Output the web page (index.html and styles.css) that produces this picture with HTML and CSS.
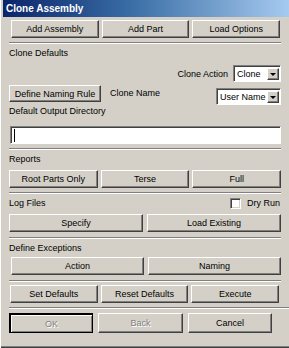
FILE: index.html
```html
<!DOCTYPE html>
<html lang="en">
<head>
    <meta charset="UTF-8">
    <title>Clone Assembly</title>
    <link rel="stylesheet" href="styles.css">
</head>
<body>
    <div class="window">
        <div class="titlebar">Clone Assembly</div>

        <div class="content">
            <div class="row three top-row">
                <button class="btn">Add Assembly</button>
                <button class="btn">Add Part</button>
                <button class="btn">Load Options</button>
            </div>

            <div class="sep"></div>

            <div class="section-label">Clone Defaults</div>

            <div class="action-row">
                <span class="label">Clone Action</span>
                <div class="combo combo-action">
                    <span class="combo-text">Clone</span>
                    <span class="combo-arrow"><span class="tri"></span></span>
                </div>
            </div>

            <div class="naming-row">
                <button class="btn btn-naming">Define Naming Rule</button>
                <span class="label name-label">Clone Name</span>
                <div class="combo combo-name">
                    <span class="combo-text">User Name</span>
                    <span class="combo-arrow"><span class="tri"></span></span>
                </div>
            </div>

            <div class="section-label dir-label">Default Output Directory</div>
            <div class="field"><span class="caret"></span></div>

            <div class="sep"></div>

            <div class="section-label reports-label">Reports</div>
            <div class="row three">
                <button class="btn">Root Parts Only</button>
                <button class="btn">Terse</button>
                <button class="btn">Full</button>
            </div>

            <div class="sep"></div>

            <div class="log-row">
                <span class="label">Log Files</span>
                <label class="check"><span class="box"></span>Dry Run</label>
            </div>
            <div class="row two">
                <button class="btn">Specify</button>
                <button class="btn">Load Existing</button>
            </div>

            <div class="sep sep-low"></div>

            <div class="section-label exceptions-label">Define Exceptions</div>
            <div class="row two inset-left">
                <button class="btn">Action</button>
                <button class="btn">Naming</button>
            </div>

            <div class="sep sep-low"></div>

            <div class="row three defaults-row">
                <button class="btn">Set Defaults</button>
                <button class="btn">Reset Defaults</button>
                <button class="btn">Execute</button>
            </div>

            <div class="sep sep-wide"></div>

            <div class="row dialog-row">
                <button class="btn btn-default" disabled>OK</button>
                <button class="btn" disabled>Back</button>
                <button class="btn">Cancel</button>
            </div>
        </div>
    </div>
</body>
</html>
```

FILE: styles.css
```css
body {
    margin: 0;
    background-color: #d4d0c8;
    font-family: "Liberation Sans", Arial, sans-serif;
    font-size: 9px;
    color: #000;
}

.window {
    width: 289px;
    height: 348px;
    box-sizing: border-box;
    padding-left: 3px;
    background-color: #d4d0c8;
    box-shadow: inset 1px 0 #ffffff, inset 0 -1px #404040, inset 0 -2px #808080;
}

.titlebar {
    height: 17px;
    line-height: 17px;
    padding-left: 3px;
    background: linear-gradient(to right, #0a246a, #3a6ea5 45%, #a6caf0);
    color: #fff;
    font-weight: bold;
    font-size: 10px;
}

.content {
    padding: 3px 8px 0 6px;
}

/* classic 3d button */
.btn {
    height: 18px;
    padding: 0;
    background-color: #d4d0c8;
    border: 1px solid;
    border-color: #ffffff #404040 #404040 #ffffff;
    box-shadow: inset -1px -1px #808080;
    font-family: inherit;
    font-size: 9px;
    color: #000;
}

.btn:disabled {
    color: #808080;
    text-shadow: 1px 1px #ffffff;
}

.btn-default {
    border-width: 2px 1px 1px 2px;
    border-color: #000;
    box-shadow: inset 1px 1px #fff, inset -1px -1px #808080;
}

.row {
    display: grid;
    gap: 3px;
}

.three {
    grid-template-columns: 1fr 1fr 1fr;
}

.two {
    grid-template-columns: 1fr 1fr;
    gap: 4px;
}

.top-row {
    margin: 0 1px 0 2px;
}

.inset-left {
    margin-left: 2px;
}

.defaults-row {
    margin: 1px 2px 0 1px;
}

.dialog-row {
    grid-template-columns: 84px 85px 84px;
    gap: 5px;
    margin-top: 4px;
}

.dialog-row .btn {
    height: 20px;
}

/* etched separator */
.sep {
    height: 0;
    border-top: 1px solid #808080;
    border-bottom: 1px solid #ffffff;
    margin: 4px 0 3px;
}

.sep-low {
    margin-top: 5px;
}

.sep-wide {
    margin-right: -8px;
}

.section-label {
    height: 12px;
    line-height: 12px;
    margin-bottom: 6px;
}

.reports-label {
    margin-bottom: 5px;
}

.exceptions-label {
    margin-bottom: 3px;
}

.label {
    white-space: nowrap;
}

.action-row {
    display: flex;
    justify-content: flex-end;
    align-items: center;
    gap: 5px;
    margin-top: 3px;
    height: 17px;
}

.naming-row {
    display: flex;
    align-items: flex-start;
    margin-top: 3px;
    height: 18px;
}

.btn-naming {
    width: 92px;
    height: 17px;
}

.name-label {
    margin: 3px 0 0 9px;
    flex: 1;
}

/* sunken combo box */
.combo {
    display: flex;
    height: 17px;
    box-sizing: border-box;
    background-color: #fff;
    border: 1px solid;
    border-color: #808080 #ffffff #ffffff #808080;
    box-shadow: inset 1px 1px #404040;
    padding: 2px 1px 1px 2px;
}

.combo-action {
    width: 48px;
}

.combo-name {
    width: 65px;
    margin-top: 3px;
}

.combo-text {
    flex: 1;
    line-height: 12px;
    padding-left: 1px;
    white-space: nowrap;
    overflow: hidden;
}

.combo-arrow {
    width: 12px;
    box-sizing: border-box;
    background-color: #d4d0c8;
    border: 1px solid;
    border-color: #ffffff #404040 #404040 #ffffff;
    box-shadow: inset -1px -1px #808080;
    display: flex;
    align-items: center;
    justify-content: center;
}

.tri {
    width: 0;
    height: 0;
    border-left: 3px solid transparent;
    border-right: 3px solid transparent;
    border-top: 3px solid #000;
}

.dir-label {
    margin-top: 2px;
    margin-bottom: 9px;
}

.field {
    height: 18px;
    margin-left: 1px;
    box-sizing: border-box;
    background-color: #fff;
    border: 1px solid;
    border-color: #808080 #ffffff #ffffff #808080;
    box-shadow: inset 1px 1px #404040;
    padding: 2px 3px;
}

.caret {
    display: block;
    width: 1px;
    height: 13px;
    background-color: #000;
}

.log-row {
    display: flex;
    justify-content: space-between;
    align-items: center;
    height: 12px;
    margin-bottom: 5px;
}

.check {
    display: flex;
    align-items: center;
    gap: 6px;
    margin-right: 1px;
}

.box {
    width: 11px;
    height: 11px;
    box-sizing: border-box;
    background-color: #fff;
    border: 1px solid;
    border-color: #808080 #ffffff #ffffff #808080;
    box-shadow: inset 1px 1px #404040, inset -1px -1px #d4d0c8;
}
```
